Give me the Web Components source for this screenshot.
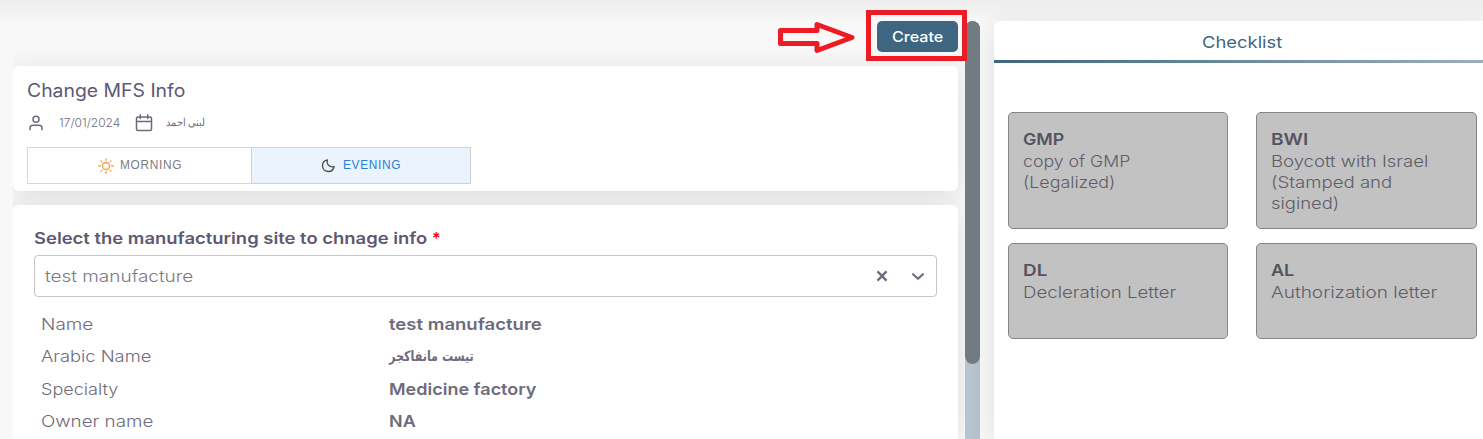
<!DOCTYPE html>
<html lang="en">
<head>
<meta charset="utf-8">
<title>Change MFS Info</title>
<style>
html,body{margin:0;height:100%;overflow:hidden}
body{font-family:Inter,"Liberation Sans",sans-serif;color:#6e6b7b;background:#f8f8f8}
</style>
</head>
<body>
<mfs-page></mfs-page>
<script>
const define = (name, html, setup) => customElements.define(name, class extends HTMLElement {
  connectedCallback() {
    if (this.shadowRoot) return;
    const t = document.createElement('template');
    t.innerHTML = html;
    this.attachShadow({mode: 'open'}).append(t.content.cloneNode(true));
    if (setup) setup(this, this.shadowRoot);
  }
});

// One line of text, widened so that it spans the width given in "w".
define('ui-text', `<style>:host{display:inline-block;white-space:nowrap;vertical-align:top;text-align:left}span{display:inline-block;transform-origin:0 50%}</style><span><slot></slot></span>`, (el, root) => {
  const w = +el.getAttribute('w');
  if (!w) return;
  const span = root.querySelector('span');
  const natural = span.getBoundingClientRect().width;
  el.style.width = w + 'px';
  span.style.transform = 'scaleX(' + (w + .3) / natural + ')';
});

define('ui-card', `<style>:host{display:block;box-sizing:border-box;background:#fff;border-radius:6px;box-shadow:0 4px 24px rgba(34,41,47,.12)}</style><slot></slot>`);

define('ui-button', `<style>:host{display:block}button{all:unset;box-sizing:border-box;width:81px;height:31px;border-radius:5px;background:#3e6680;color:#fff;font-weight:500;font-size:14.5px;line-height:32px;text-align:center;display:block}</style><button><slot></slot></button>`);

define('shift-option', `<style>
:host{display:flex;box-sizing:border-box;height:37px;align-items:center;justify-content:center;gap:6px;border:1px solid #d5d9dc;font:12px/35px "Liberation Sans",sans-serif;letter-spacing:.7px;color:#7c7c7c}
:host([active]){background:#ebf3fc;color:#2680d9;border-color:#ccd3dc;margin-left:-1px;gap:7px}
::slotted(ui-text){height:35px}
</style><slot name="icon"></slot><slot></slot>`);

define('info-row', `<style>
:host{display:grid;grid-template-columns:348.4px 1fr;height:32.4px;line-height:32px;font-size:16.3px}
.k{font-weight:350}.v{font-weight:600}
</style><div class="k"><slot></slot></div><div class="v"><slot name="value"></slot></div>`);

define('check-tile', `<style>
:host{display:block;box-sizing:border-box;background:#c2c2c2;border:1px solid #82868b;border-radius:5px;padding:16px 14px;font-size:16.3px;line-height:21px;color:#5f5c69}
.t{font-weight:600;height:22px;color:#555361}
.b{display:flex;flex-direction:column;align-items:flex-start;font-weight:350}
</style><div class="t"><slot name="code"></slot></div><div class="b"><slot></slot></div>`);

define('ui-select', `<style>
:host{display:flex;box-sizing:border-box;width:903px;height:42px;border:1px solid #c6c6c9;border-radius:4px;align-items:center;padding:0 10px;font-size:16.3px;font-weight:350;color:#7b7887;justify-content:space-between}
.i{display:flex;gap:20px}svg{display:block}
</style><slot></slot><div class="i">
<svg width="16" height="16" viewBox="0 0 16 16" fill="none" stroke="#6e6b7b" stroke-width="2.3"><path d="M3.5 3.4l9 9.2M12.5 3.4l-9 9.2"/></svg>
<svg width="16" height="16" viewBox="0 0 16 16" fill="none" stroke="#6e6b7b" stroke-width="2.2" stroke-linecap="round" stroke-linejoin="round"><path d="M3.1 6.2L8 10.7l4.9-4.5"/></svg></div>`);

define('mfs-page', `<style>
:host{display:grid;grid-template-columns:967px 496px;column-gap:14px;padding:21px 0 0 13px;box-sizing:border-box;height:439px;width:1490px;position:relative;background:linear-gradient(#ededed 0,#f0f0f0 7px,#f8f8f8 22px)}
.scroll{display:grid;grid-template-columns:945px 15px;column-gap:7px;height:418px;overflow:hidden}
.bar{background:linear-gradient(90deg,#b6c6d0,#b3c0cb);height:418px;z-index:1;border-radius:8px 8px 0 0}
.thumb{height:343px;background:#737b82;border-radius:8px}
.act{height:45px;display:flex;justify-content:flex-end}
.head{height:125px;padding:13px 14px 0;margin-bottom:14px}
.title{font-size:18.3px;line-height:22px;color:#5e5873;height:22px}
.meta{display:flex;align-items:center;height:18px;margin-top:13px;font-size:11.8px;line-height:18px;font-weight:350}
.meta svg{display:block}
.meta ui-text{margin:0 15px 0 14px}
.meta ui-text.ar{margin-left:13px}
.shift{display:grid;grid-template-columns:225px 219px;margin-top:15px}
.shift svg{display:block}
.form{height:234px;border-radius:6px 6px 0 0;padding:21px 21px 0}
.label{font-weight:600;font-size:16px;line-height:24px;color:#5e5873;height:24px;display:flex;gap:5px;margin-bottom:5px}
.req{color:#f00}
.rows{padding:11px 0 0 7px}
.side{height:418px;border-radius:6px 6px 0 0}
.tab{height:39px;line-height:42px;text-align:center;font-size:16.3px;color:#3e6680}
.line{height:3px;background:linear-gradient(90deg,#3e6680,#9bb0bd)}
.tiles{display:grid;grid-template-columns:220px 221px;grid-template-rows:117px 96px;gap:14px 28px;padding:49px 14px 0}
.mark{position:absolute;left:778px;top:10px;z-index:3}
.ar{font-family:"DejaVu Sans",sans-serif}
</style>
<div class="scroll">
 <main>
  <div class="act"><ui-button><ui-text w="51">Create</ui-text></ui-button></div>
  <ui-card class="head">
   <div class="title"><ui-text w="158">Change MFS Info</ui-text></div>
   <div class="meta">
    <svg width="18" height="18" viewBox="0 0 24 24" fill="none" stroke="#6e6b7b" stroke-width="2" stroke-linecap="round" stroke-linejoin="round"><path d="M20 21v-2a4 4 0 0 0-4-4H8a4 4 0 0 0-4 4v2"/><circle cx="12" cy="7" r="4"/></svg>
    <ui-text w="61">17/01/2024</ui-text>
    <svg width="18" height="18" viewBox="0 0 24 24" fill="none" stroke="#6e6b7b" stroke-width="2" stroke-linecap="round" stroke-linejoin="round"><rect x="2" y="4" width="20" height="18" rx="2"/><path d="M7 1v5M17 1v5M2 10h20"/></svg>
    <ui-text class="ar" w="38" style="font-size:11px">لبنى احمد</ui-text>
   </div>
   <div class="shift">
    <shift-option><svg slot="icon" width="16" height="16" viewBox="0 0 16 16" fill="none" stroke="#f99b3c" stroke-width="1.3" stroke-linecap="round"><circle cx="8" cy="8" r="3.5"/><path d="M8 .8v1.500M8 13.700v1.500M.8 8h1.500M13.700 8h1.500M2.900 2.900l1 1M12.100 12.100l1 1M2.900 13.100l1-1M12.100 3.900l1-1"/></svg><ui-text w="62">MORNING</ui-text></shift-option>
    <shift-option active><svg slot="icon" width="15" height="15" viewBox="0 0 15 15" fill="none" stroke="#4c4f54" stroke-width="1.3" stroke-linejoin="round"><path d="M6.400 1.800C4.800 5.900 8.800 10.100 13.200 8.500C12.600 11.500 10.300 13.500 7.400 13.500C4 13.500 1.500 11 1.500 7.700C1.500 4.700 3.500 2.300 6.400 1.800Z"/></svg><ui-text w="58">EVENING</ui-text></shift-option>
   </div>
  </ui-card>
  <ui-card class="form">
   <div class="label"><ui-text w="393">Select the manufacturing site to chnage info</ui-text><span class="req">*</span></div>
   <ui-select><ui-text w="148">test manufacture</ui-text></ui-select>
   <div class="rows">
    <info-row><ui-text w="52">Name</ui-text><ui-text slot="value" w="152.5">test manufacture</ui-text></info-row>
    <info-row><ui-text w="110">Arabic Name</ui-text><ui-text slot="value" class="ar" w="84.5" style="font-size:14px">تيست مانفاكجر</ui-text></info-row>
    <info-row><ui-text w="77">Specialty</ui-text><ui-text slot="value" w="147">Medicine factory</ui-text></info-row>
    <info-row style="height:28px"><ui-text w="112">Owner name</ui-text><ui-text slot="value" w="26.5">NA</ui-text></info-row>
   </div>
  </ui-card>
 </main>
 <div class="bar"><div class="thumb"></div></div>
</div>
<ui-card class="side">
 <div class="tab"><ui-text w="80">Checklist</ui-text></div>
 <div class="line"></div>
 <div class="tiles">
  <check-tile><ui-text slot="code" w="41">GMP</ui-text><ui-text w="107">copy of GMP</ui-text><ui-text w="92">(Legalized)</ui-text></check-tile>
  <check-tile><ui-text slot="code" w="37">BWI</ui-text><ui-text w="157">Boycott with Israel</ui-text><ui-text w="121">(Stamped and</ui-text><ui-text w="68">sigined)</ui-text></check-tile>
  <check-tile><ui-text slot="code" w="24">DL</ui-text><ui-text w="153">Decleration Letter</ui-text></check-tile>
  <check-tile><ui-text slot="code" w="23">AL</ui-text><ui-text w="166">Authorization letter</ui-text></check-tile>
 </div>
</ui-card>
<svg class="mark" width="190" height="52" viewBox="0 0 190 52" fill="none" stroke="#ed1c24"><rect x="90.5" y="2.5" width="96" height="46" stroke-width="5"/><path d="M2.500 20.500H39V14.500L74 27.500L39 40.500V33.500H2.500Z" stroke-width="5" stroke-linejoin="round"/></svg>
`);
</script>
</body>
</html>
